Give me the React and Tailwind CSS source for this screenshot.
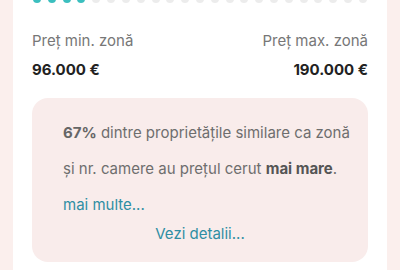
import React from "react"

const dots = Array.from({ length: 23 }, (_, i) => i < 4)

const App = () => {
  return (
    <div className="w-[400px] h-[270px] overflow-hidden bg-[#fbefed] px-[13px] font-['Inter',sans-serif]">
      <div className="h-full bg-white px-[19px] flex flex-col">
        <div className="flex justify-between -mt-[5px] px-[1px]">
          { dots.map((on, i) => (
            <span key={ i }
              className={ "block w-[8px] h-[8px] rounded-full " + (on ? "bg-[#3bbfbf]" : "bg-[#ececec]") }/>
          )) }
        </div>
        <div className="flex justify-between mt-[28px]">
          <div>
            <div className="text-[15px] leading-[20px] text-[#777]">Preț min. zonă</div>
            <div className="text-[15px] leading-[20px] font-bold text-[#222] mt-[9px]">96.000 €</div>
          </div>
          <div className="text-right">
            <div className="text-[15px] leading-[20px] text-[#777]">Preț max. zonă</div>
            <div className="text-[15px] leading-[20px] font-bold text-[#222] mt-[9px]">190.000 €</div>
          </div>
        </div>
        <div className="mt-[18px] bg-[#f9eceb] rounded-[16px] pl-[31px] pr-[16px] pt-[17px] pb-[18px]">
          <p className="text-[15px] leading-[36px] text-[#6e6e6e]">
            <span className="font-bold text-[#666]">67%</span> dintre proprietățile similare ca zonă și nr. camere au prețul cerut <span className="font-bold text-[#555]">mai mare</span>.
          </p>
          <div className="text-[15px] leading-[36px] text-[#2f8ea3]">mai multe...</div>
          <div className="text-[15px] leading-[20px] text-[#2f8ea3] text-center mt-[1px] -ml-[15px]">Vezi detalii...</div>
        </div>
      </div>
    </div>
  )
}

export default App
